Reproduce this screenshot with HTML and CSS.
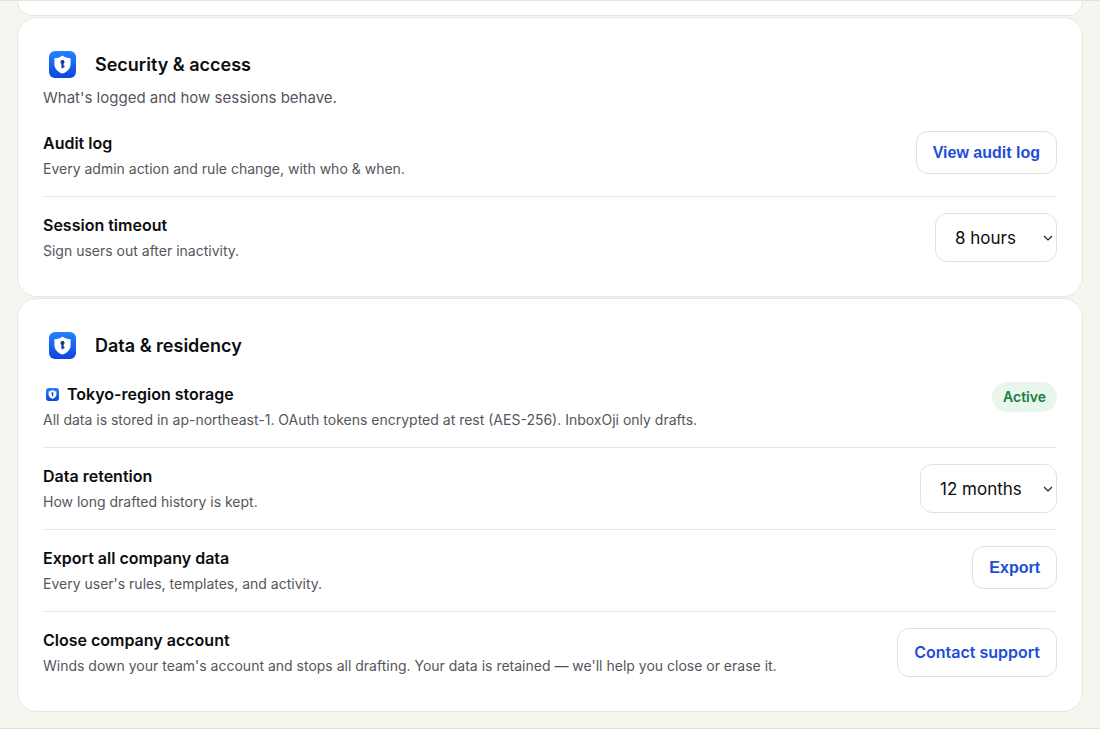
FILE: index.html
```html
<!DOCTYPE html>
<html lang="en">
<head>
<meta charset="utf-8">
<meta name="viewport" content="width=device-width, initial-scale=1">
<title>Company settings</title>
<link rel="stylesheet" href="styles.css">
</head>
<body>
<svg class="defs" aria-hidden="true">
  <defs>
    <linearGradient id="tile" x1="0" y1="0" x2="0" y2="1">
      <stop offset="0" stop-color="#2383ff"/>
      <stop offset="1" stop-color="#0d46dd"/>
    </linearGradient>
    <symbol id="shield" viewBox="0 0 27 27">
      <rect width="27" height="27" rx="6" fill="url(#tile)"/>
      <path d="M13.5 4.400c2.300 1.700 5 2.600 8.100 2.800v5.700c0 4.500-3.100 7.700-8.100 9.700-5-2-8.100-5.200-8.100-9.700V7.200c3.100-.2 5.800-1.100 8.100-2.800z" fill="#fff"/>
      <path d="M13.500 9a2 2 0 0 1 1.100 3.700v3.600a1.100 1.100 0 0 1-2.200 0v-3.600A2 2 0 0 1 13.500 9z" fill="#123a9c"/>
      <path d="M14 15.300h1.500" stroke="#123a9c" stroke-width="1.200"/>
    </symbol>
  </defs>
</svg>
<main class="page">
  <section class="card card-previous"></section>

  <section class="card">
    <header class="card-head">
      <span class="head-icon"><svg class="icon-large" aria-hidden="true"><use href="#shield"/></svg></span>
      <h2 class="card-title">Security &amp; access</h2>
    </header>
    <p class="card-sub">What's logged and how sessions behave.</p>
    <div class="row">
      <div class="row-text">
        <h3 class="row-title">Audit log</h3>
        <p class="row-desc">Every admin action and rule change, with who &amp; when.</p>
      </div>
      <button class="button" type="button">View audit log</button>
    </div>
    <div class="row">
      <div class="row-text">
        <h3 class="row-title"><label for="timeout">Session timeout</label></h3>
        <p class="row-desc">Sign users out after inactivity.</p>
      </div>
      <div class="select-wrap">
        <select class="select" id="timeout"><option>8 hours</option></select>
        <svg class="chevron" viewBox="0 0 10 6" aria-hidden="true"><path d="M1 1l4 4 4-4"/></svg>
      </div>
    </div>
  </section>

  <section class="card">
    <header class="card-head">
      <span class="head-icon"><svg class="icon-large" aria-hidden="true"><use href="#shield"/></svg></span>
      <h2 class="card-title">Data &amp; residency</h2>
    </header>
    <div class="row">
      <div class="row-text">
        <h3 class="row-title"><svg class="icon-small" aria-hidden="true"><use href="#shield"/></svg>Tokyo-region storage</h3>
        <p class="row-desc">All data is stored in ap-northeast-1. OAuth tokens encrypted at rest (AES-256). InboxOji only drafts.</p>
      </div>
      <span class="badge">Active</span>
    </div>
    <div class="row">
      <div class="row-text">
        <h3 class="row-title"><label for="retention">Data retention</label></h3>
        <p class="row-desc">How long drafted history is kept.</p>
      </div>
      <div class="select-wrap">
        <select class="select" id="retention"><option>12 months</option></select>
        <svg class="chevron" viewBox="0 0 10 6" aria-hidden="true"><path d="M1 1l4 4 4-4"/></svg>
      </div>
    </div>
    <div class="row">
      <div class="row-text">
        <h3 class="row-title">Export all company data</h3>
        <p class="row-desc">Every user's rules, templates, and activity.</p>
      </div>
      <button class="button" type="button">Export</button>
    </div>
    <div class="row">
      <div class="row-text">
        <h3 class="row-title">Close company account</h3>
        <p class="row-desc">Winds down your team's account and stops all drafting. Your data is retained — we'll help you close or erase it.</p>
      </div>
      <a class="button button-link" href="#support">Contact support</a>
    </div>
  </section>
</main>
</body>
</html>
```
FILE: styles.css
```css
* {
  box-sizing: border-box;
}

body {
  margin: 0;
  background: #f5f6f0;
  color: #0c0d0f;
  font-family: Inter, "Liberation Sans", sans-serif;
}

h2, h3, p {
  margin: 0;
}

.defs {
  position: absolute;
  width: 0;
  height: 0;
}

.page {
  display: flex;
  flex-direction: column;
  gap: 1px;
  padding: 0 17px 16px;
  border-top: 1px solid #e4e4df;
  border-bottom: 1px solid #dfe0dc;
}

.card {
  padding: 26px 25px 18px;
  border: 1px solid #e7e8df;
  border-radius: 20px;
  background: #fff;
}

.card-previous {
  padding: 14px 0 0;
  border-top: 0;
  border-radius: 0 0 20px 20px;
}

.card-head {
  display: flex;
  align-items: center;
  gap: 13px;
  margin-bottom: 1px;
}

.head-icon {
  display: grid;
  place-items: center;
  width: 39px;
  height: 40px;
}

.icon-large {
  width: 27px;
  height: 27px;
}

.icon-small {
  width: 13px;
  height: 13px;
  margin: 0 8px 0 3px;
}

.card-title {
  font-size: 18px;
  font-weight: 600;
  line-height: 27px;
}

.card-sub {
  padding-bottom: 5px;
  color: #55565c;
  font-size: 15px;
  line-height: 25px;
}

.row {
  display: flex;
  align-items: flex-start;
  justify-content: space-between;
  gap: 16px;
  padding: 16px 0;
}

.row + .row {
  border-top: 1px solid #e7e8df;
}

.row-title {
  display: flex;
  align-items: center;
  font-size: 16px;
  font-weight: 600;
  line-height: 25px;
}

.row-desc {
  margin-top: 1px;
  color: #55565c;
  font-size: 14px;
  line-height: 23px;
}

.button {
  flex: none;
  padding: 8px 16px;
  border: 1px solid #e1e2d8;
  border-radius: 12px;
  background: #fff;
  color: #1d4ed8;
  font-family: "Liberation Sans", sans-serif;
  font-size: 16px;
  font-weight: 600;
  line-height: 25px;
  text-decoration: none;
}

.button-link {
  padding: 11px 16px;
  font-family: inherit;
}

.select-wrap {
  position: relative;
  flex: none;
}

.select {
  appearance: none;
  display: block;
  min-width: 122px;
  padding: 12px 34px 11px 19px;
  border: 1px solid #e1e2d8;
  border-radius: 12px;
  background: #fff;
  color: #0c0d0f;
  font-family: inherit;
  font-size: 17px;
  line-height: 24px;
}

.chevron {
  position: absolute;
  top: 22px;
  right: 4px;
  width: 10px;
  height: 6px;
  fill: none;
  stroke: #222;
  stroke-width: 1.2;
  pointer-events: none;
}

.badge {
  flex: none;
  padding: 0 11px;
  border-radius: 15px;
  background: #e8f6ee;
  color: #15803d;
  font-size: 14px;
  font-weight: 600;
  line-height: 30px;
}
```
